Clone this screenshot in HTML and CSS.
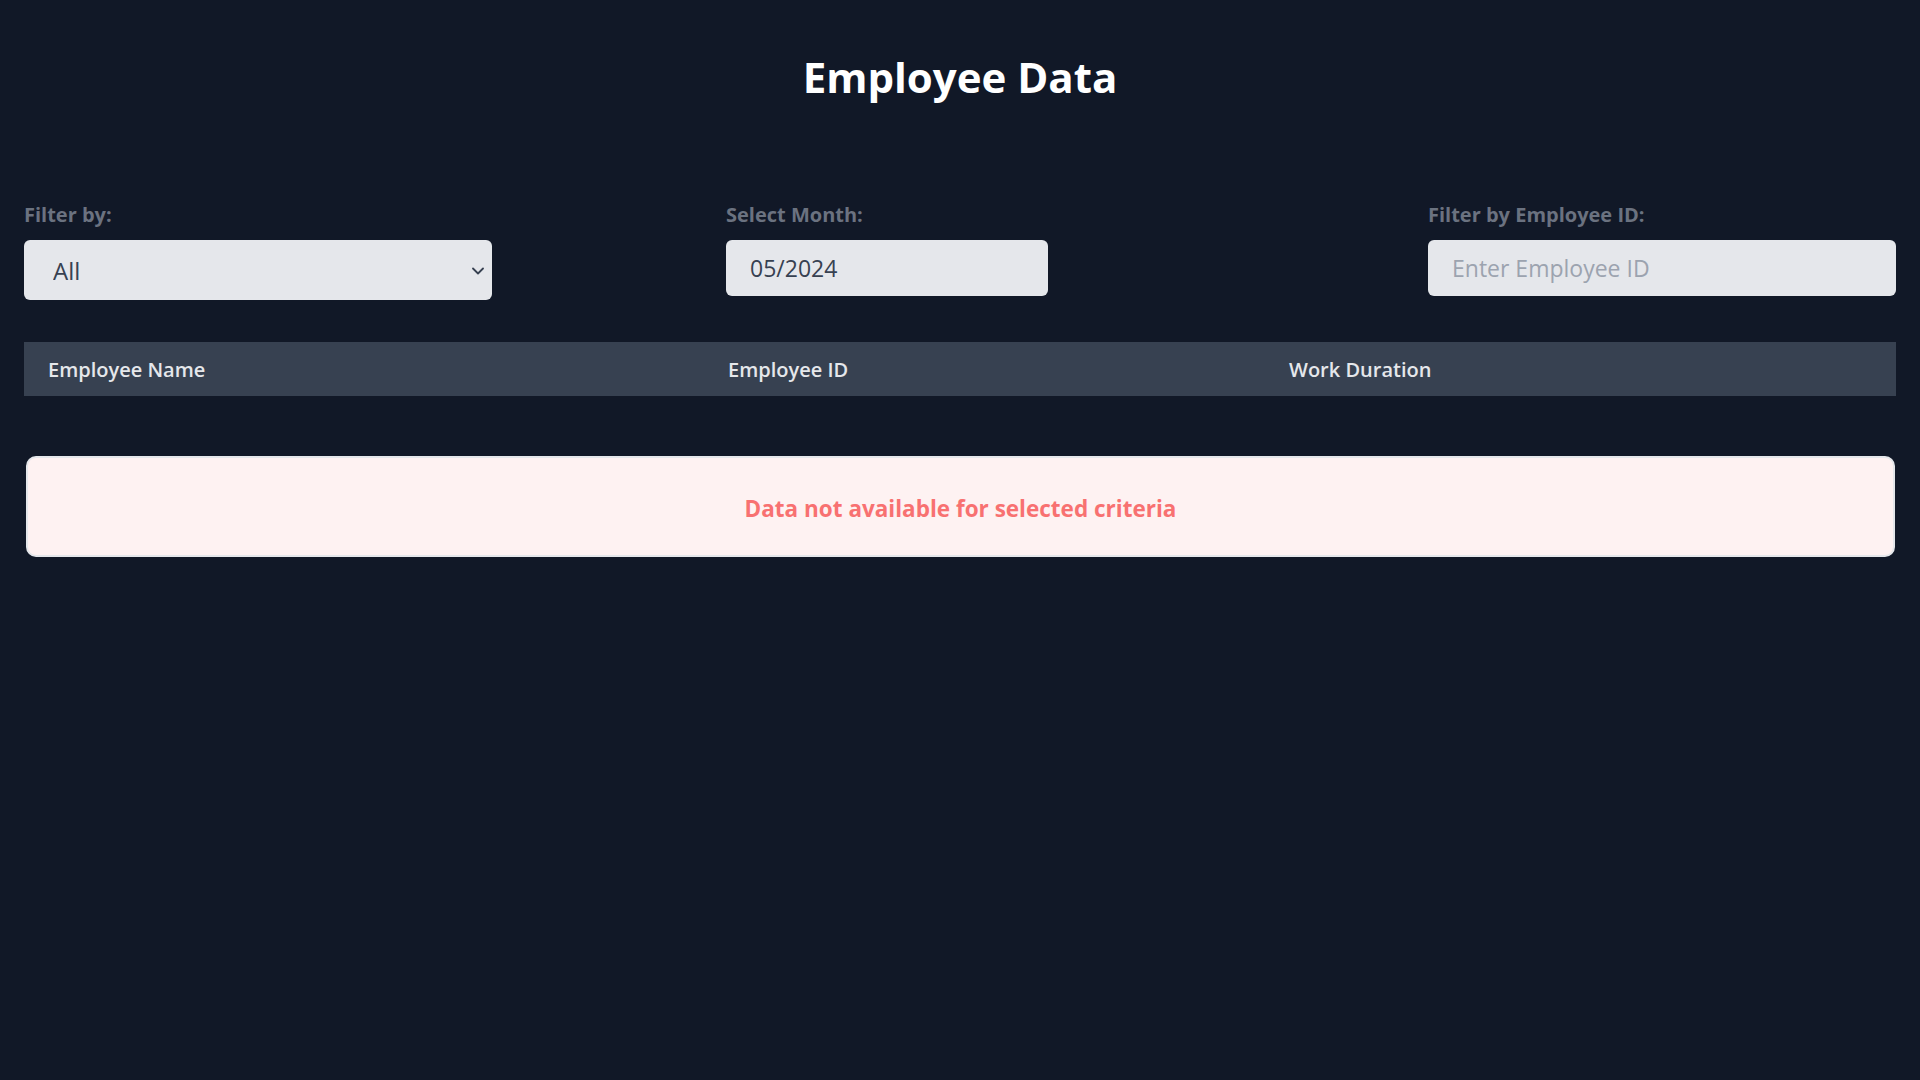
FILE: index.html
```html
<!DOCTYPE html>
<html lang="en">
<head>
<meta charset="utf-8">
<title>Employee Data</title>
<link rel="stylesheet" href="styles.css">
</head>
<body>
<div class="page">
  <h1 class="title">Employee Data</h1>
  <div class="filters">
    <div class="field">
      <label class="label" for="filter">Filter by:</label>
      <div class="select-wrap">
        <select id="filter" class="select">
          <option>All</option>
        </select>
        <svg class="chevron" viewBox="0 0 12 8" width="12" height="8" aria-hidden="true">
          <path d="M1 1.5 L6 6.5 L11 1.5" fill="none" stroke="#374151" stroke-width="1.8" stroke-linecap="round" stroke-linejoin="round"/>
        </svg>
      </div>
    </div>
    <div class="field">
      <label class="label" for="month">Select Month:</label>
      <input id="month" class="input input-month" type="text" value="05/2024">
    </div>
    <div class="field">
      <label class="label" for="empid">Filter by Employee ID:</label>
      <input id="empid" class="input" type="text" placeholder="Enter Employee ID">
    </div>
  </div>
  <table class="table">
    <thead>
      <tr>
        <th class="col-name">Employee Name</th>
        <th class="col-id">Employee ID</th>
        <th class="col-dur">Work Duration</th>
      </tr>
    </thead>
  </table>
  <div class="empty">Data not available for selected criteria</div>
</div>
</body>
</html>
```

FILE: styles.css
```css
* { box-sizing: border-box; }
html, body { margin: 0; padding: 0; }
body {
  background: #111827;
  font-family: "Open Sans", "Noto Sans", sans-serif;
  color: #e5e7eb;
  min-height: 100vh;
}
.page {
  padding: 24px;
}
.title {
  margin: 28px 0 99px;
  text-align: center;
  font-size: 42px;
  line-height: 50px;
  font-weight: 700;
  color: #ffffff;
}
.filters {
  display: flex;
  justify-content: space-between;
}
.field {
  width: 468px;
  display: flex;
  flex-direction: column;
  align-items: flex-start;
}
.label {
  display: block;
  font-size: 20px;
  line-height: 28px;
  font-weight: 700;
  color: #6b7280;
  margin-bottom: 11px;
}
.select-wrap {
  position: relative;
  width: 100%;
}
.select {
  appearance: none;
  -webkit-appearance: none;
  width: 100%;
  height: 60px;
  border: none;
  border-radius: 6px;
  background: #e5e7eb;
  color: #374151;
  font-family: inherit;
  font-size: 24px;
  padding: 0 29px;
  outline: none;
}
.chevron {
  position: absolute;
  right: 8px;
  top: 27px;
}
.input {
  width: 100%;
  height: 56px;
  border: none;
  border-radius: 6px;
  background: #e5e7eb;
  color: #374151;
  font-family: inherit;
  font-size: 23px;
  padding: 0 24px;
  outline: none;
}
.input::placeholder { color: #9ca3af; }
.input-month { width: 322px; }
.table {
  width: 100%;
  margin-top: 42px;
  border-collapse: collapse;
  table-layout: fixed;
}
.table th {
  background: #374151;
  color: #e5e7eb;
  text-align: left;
  font-size: 20px;
  line-height: 30px;
  font-weight: 600;
  padding: 13px 24px 11px;
}
.col-name { width: 680px; }
.col-id { width: 561px; }
.empty {
  margin: 60px 1px 0 2px;
  height: 101px;
  border: 2px solid #e5e7eb;
  border-radius: 10px;
  background: #fef2f2;
  color: #f87171;
  font-size: 22.5px;
  font-weight: 700;
  display: flex;
  align-items: center;
  justify-content: center;
  padding-top: 4px;
}
```
